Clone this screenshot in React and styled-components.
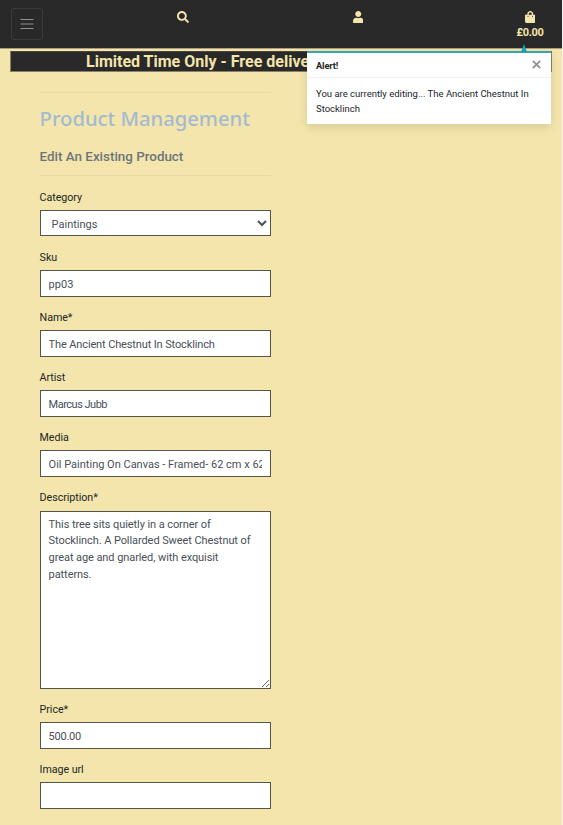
import React from "react";
import styled, { createGlobalStyle } from "styled-components";

const Global = createGlobalStyle`
  *, *::before, *::after { box-sizing: border-box; }
  html { background: #f1f1f1; }
  body { margin: 0; font-family: Roboto, "Noto Sans", sans-serif; font-size: 11px; line-height: 16.8px; color: #212529; overflow: hidden; }
`;

const Page = styled.div`
  position: relative;
  width: 562px;
  height: 825px;
  overflow: hidden;
  background: #f3e5ab;
`;

const Header = styled.header`
  display: grid;
  grid-template-columns: 95px 175px 176px 1fr;
  height: 49px;
  background: #292929;
  border-bottom: 1px solid #ae9d7c;
  color: #f3e5ab;
`;

const MenuButton = styled.button`
  display: flex;
  align-items: center;
  justify-content: center;
  width: 32px;
  height: 32px;
  margin: 8px 0 0 11px;
  padding: 0;
  background: transparent;
  border: 1px solid #3c3c3c;
  border-radius: 3px;
`;

const NavItem = styled.a`
  display: flex;
  flex-direction: column;
  align-items: center;
  padding-top: 11px;
  padding-left: ${(p) => p.$shift || 0}px;
  svg { display: block; }
`;

const Total = styled.span`
  margin-top: 2px;
  font-size: 11px;
  font-weight: 700;
  letter-spacing: -0.3px;
  line-height: 15px;
`;

const Banner = styled.div`
  height: 21px;
  margin: 2px 10px 0;
  padding-left: 75px;
  overflow: hidden;
  white-space: nowrap;
  background: #292929;
  border: 1px solid #8c8066;
  border-top-color: #4b463c;
  color: #f3e5ab;
  font-size: 16px;
  font-weight: 700;
  line-height: 19px;
`;

const Content = styled.main`
  width: 231.3px;
  margin: 20px 0 0 39.6px;
`;

const Rule = styled.hr`
  height: 1px;
  margin: 0;
  border: 0;
  background: #e6d9a3;
`;

const Title = styled.h1`
  margin: 12px 0 0;
  color: #a3bbd2;
  font: 500 20.2px/26px "Noto Sans", sans-serif;
  white-space: nowrap;
`;

const Subtitle = styled.h2`
  margin: 17px 0 10px;
  color: #6c757d;
  font-size: 13.4px;
  font-weight: 500;
  line-height: 17px;
`;

const Form = styled.form`
  padding-top: 12.5px;
`;

const Field = styled.div`
  margin-bottom: 12.25px;
`;

const Label = styled.label`
  display: block;
  margin-bottom: 4px;
  font-size: 10.7px;
  letter-spacing: -0.05px;
  line-height: 17.3px;
`;

const Control = styled.input`
  display: block;
  width: 100%;
  height: ${(p) => p.$height || 26.6}px;
  margin: 0;
  padding: 4px 8px 2px;
  background: #fff;
  border: 1px solid #55554a;
  border-radius: 0;
  outline: 0;
  color: #495057;
  font: 400 11px/16.8px Roboto, sans-serif;
  letter-spacing: ${(p) => p.$tracking || 0}px;
`;

const Toast = styled.section`
  position: absolute;
  top: 51px;
  left: 307px;
  width: 244px;
  height: 73px;
  background: #fff;
  border-top: 2px solid #35a5b5;
  box-shadow: 0 3px 9px rgba(0, 0, 0, 0.12);
`;

const Arrow = styled.span`
  position: absolute;
  top: -9px;
  left: 214px;
  border: solid transparent;
  border-width: 0 3px 8px;
  border-bottom-color: #17a2b8;
`;

const ToastHeader = styled.header`
  display: flex;
  align-items: center;
  justify-content: space-between;
  height: 25px;
  padding: 2px 10px 0 9px;
  border-bottom: 1px solid #f2f2f2;
  font-size: 9.3px;
  letter-spacing: -0.15px;
`;

const ToastBody = styled.p`
  margin: 0;
  padding: 8px 9px;
  font-size: 9.5px;
  line-height: 15px;
`;

const CloseButton = styled.button`
  display: flex;
  margin: -4px 0 0;
  padding: 0;
  background: none;
  border: 0;
`;

const fields = [
  { label: "Category", as: "select", options: ["Paintings"] },
  { label: "Sku", value: "pp03" },
  { label: "Name*", value: "The Ancient Chestnut In Stocklinch", tracking: -0.13 },
  { label: "Artist", value: "Marcus Jubb", tracking: -0.5 },
  { label: "Media", value: "Oil Painting On Canvas - Framed- 62 cm x 62 cm" },
  { label: "Description*", as: "textarea", height: 178, tracking: -0.08, value: "This tree sits quietly in a corner of Stocklinch. A Pollarded Sweet Chestnut of great age and gnarled, with exquisit patterns." },
  { label: "Price*", value: "500.00", tracking: -0.25 },
  { label: "Image url", value: "" },
];

const Select = styled(Control)`
  padding: 4px 0 2px 7px;
`;

const TextArea = styled(Control)`
  padding: 5px 8px;
  resize: both;
`;

function FormField({ field }) {
  const { label, value, options, height, tracking } = field;
  return (
    <Field>
      <Label>{label}</Label>
      {field.as === "select" ? (
        <Select as="select">{options.map((o) => <option key={o}>{o}</option>)}</Select>
      ) : field.as === "textarea" ? (
        <TextArea as="textarea" $height={height} $tracking={tracking} defaultValue={value} spellCheck={false} />
      ) : (
        <Control defaultValue={value} $tracking={tracking} />
      )}
    </Field>
  );
}

export default function App() {
  return (
    <>
      <Global />
      <Page>
        <Header>
          <MenuButton aria-label="Menu">
            <svg width="14" height="12" viewBox="0 0 14 12" stroke="#8f8f8f" strokeWidth="1">
              <path d="M.5 1.500h13M.5 6h13M.5 10.500h13" />
            </svg>
          </MenuButton>
          <NavItem>
            <svg width="12" height="12" viewBox="0 0 512 512" fill="currentColor">
              <path d="M505 442.700L405.300 343c-4.500-4.500-10.600-7-17-7H372c27.600-35.300 44-79.700 44-128C416 93.100 322.900 0 208 0S0 93.100 0 208s93.100 208 208 208c48.300 0 92.700-16.400 128-44v16.300c0 6.400 2.500 12.500 7 17l99.700 99.700c9.400 9.400 24.600 9.400 33.900 0l28.300-28.300c9.400-9.400 9.400-24.600.1-34zM208 336c-70.700 0-128-57.200-128-128 0-70.700 57.200-128 128-128 70.700 0 128 57.200 128 128 0 70.700-57.200 128-128 128z" />
            </svg>
          </NavItem>
          <NavItem>
            <svg width="10.500" height="12" viewBox="0 0 448 512" fill="currentColor">
              <path d="M224 256c70.700 0 128-57.300 128-128S294.700 0 224 0 96 57.300 96 128s57.300 128 128 128zm89.600 32h-16.700c-22.200 10.200-46.900 16-72.900 16s-50.600-5.800-72.900-16h-16.700C60.200 288 0 348.200 0 422.400V464c0 26.500 21.500 48 48 48h352c26.500 0 48-21.500 48-48v-41.600c0-74.200-60.200-134.400-134.400-134.400z" />
            </svg>
          </NavItem>
          <NavItem $shift={52}>
            <svg width="10.500" height="12" viewBox="0 0 448 512" fill="currentColor">
              <path d="M352 160v-32C352 57.400 294.600 0 224 0S96 57.400 96 128v32H0v272c0 44.200 35.800 80 80 80h288c44.200 0 80-35.800 80-80V160h-96zm-192-32c0-35.300 28.700-64 64-64s64 28.700 64 64v32H160v-32zm160 120c-13.300 0-24-10.700-24-24s10.700-24 24-24 24 10.700 24 24-10.700 24-24 24zm-192 0c-13.300 0-24-10.700-24-24s10.700-24 24-24 24 10.700 24 24-10.700 24-24 24z" />
            </svg>
            <Total>£0.00</Total>
          </NavItem>
        </Header>
        <Banner>Limited Time Only - Free delive</Banner>
        <Content>
          <Rule />
          <Title>Product Management</Title>
          <Subtitle>Edit An Existing Product</Subtitle>
          <Rule />
          <Form>
            {fields.map((f) => <FormField key={f.label} field={f} />)}
          </Form>
        </Content>
        <Toast>
          <Arrow />
          <ToastHeader>
            <strong>Alert!</strong>
            <CloseButton aria-label="Close">
              <svg width="9" height="9" viewBox="0 0 9 9" stroke="#929292" strokeWidth="1.900">
                <path d="M.8.800l7.400 7.400M8.200.800L.8 8.200" />
              </svg>
            </CloseButton>
          </ToastHeader>
          <ToastBody>You are currently editing... The Ancient Chestnut In Stocklinch</ToastBody>
        </Toast>
      </Page>
    </>
  );
}
